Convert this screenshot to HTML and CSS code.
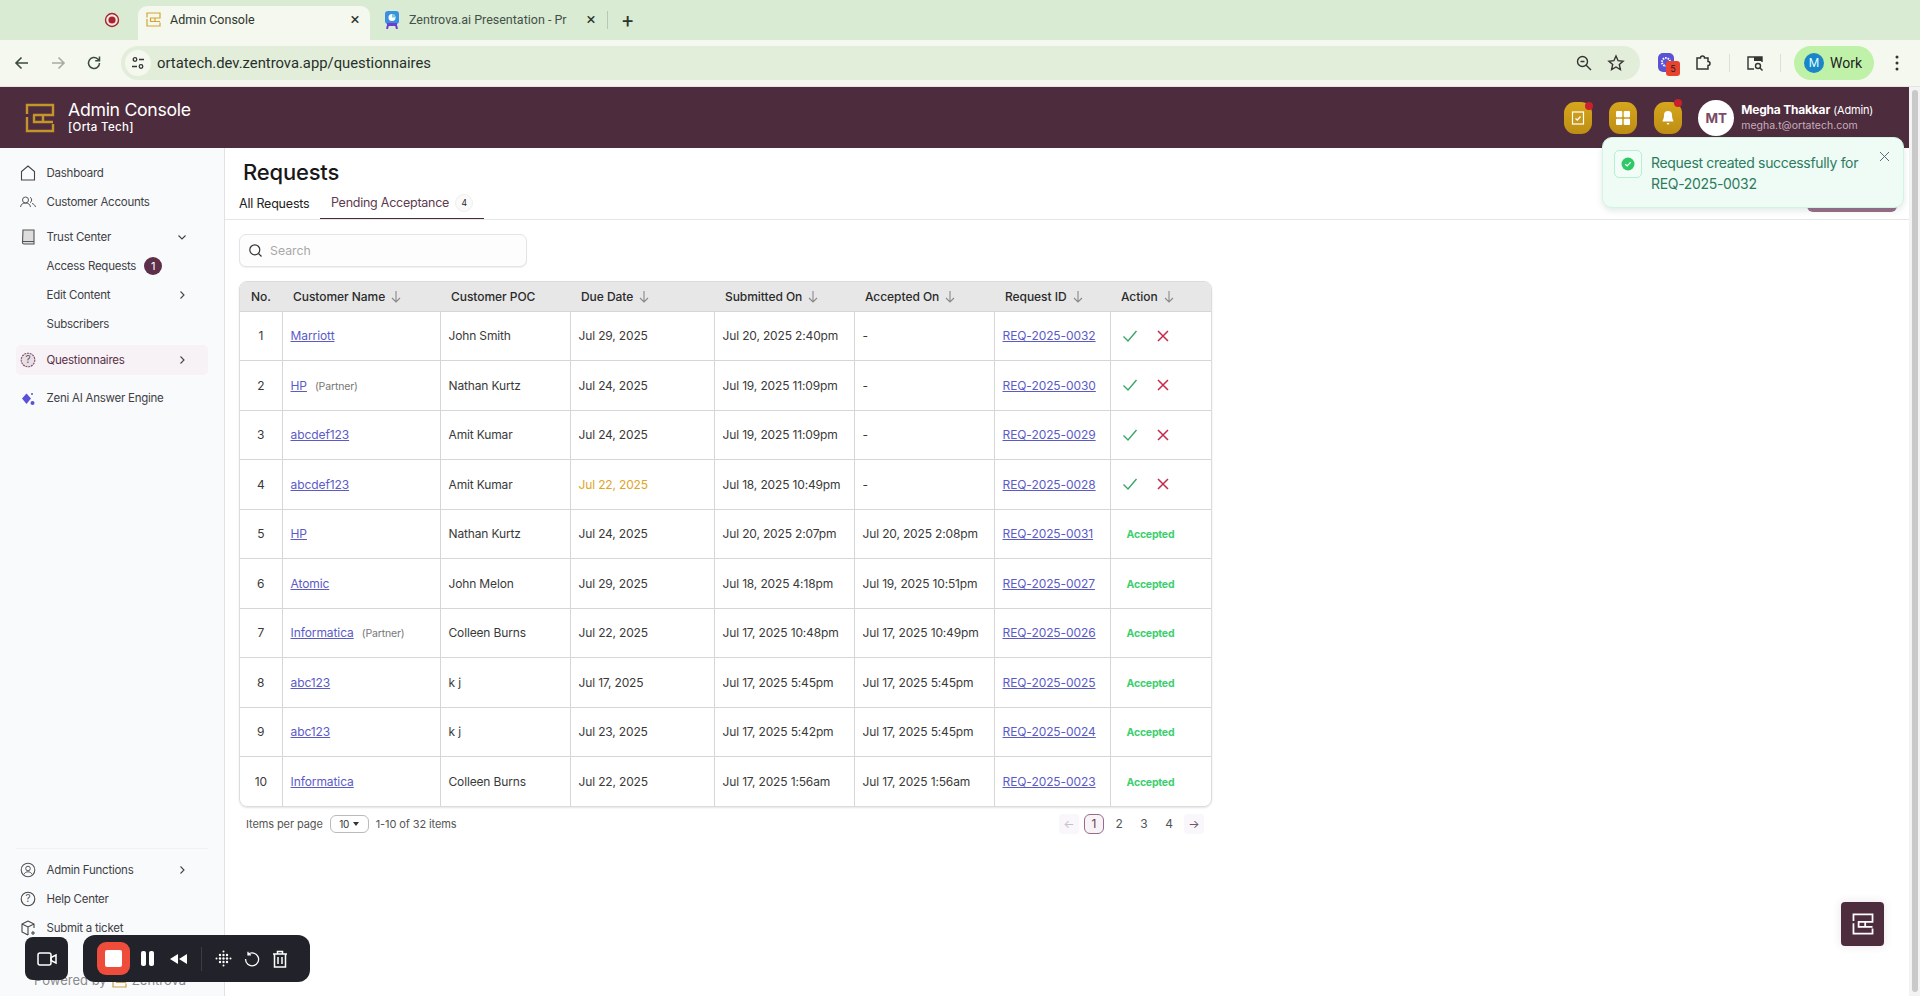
FILE: index.html
```html
<!DOCTYPE html>
<html lang="en">
<head>
<meta charset="utf-8">
<title>Admin Console</title>
<link rel="stylesheet" href="styles.css">
</head>
<body>
<svg class="defs" width="0" height="0">
  <symbol id="logo" viewBox="0 0 30 30"><path d="M2 11V2H28V12H8M2 14V28H28V21M9 12V19H18V12M18 19H28" fill="none" stroke="currentColor" stroke-width="2.4"/></symbol>
  <symbol id="down" viewBox="0 0 12 14"><path d="M6 1v11M2 8l4 4 4-4" fill="none" stroke="currentColor" stroke-width="1.1"/></symbol>
  <symbol id="right" viewBox="0 0 12 12"><path d="M4.5 2.5 8 6l-3.500 3.500" fill="none" stroke="currentColor" stroke-width="1.100"/></symbol>
  <symbol id="yes" viewBox="0 0 16 16"><path d="M1.500 8.500 6 13l8.500-10" fill="none" stroke="currentColor" stroke-width="1.400"/></symbol>
  <symbol id="no" viewBox="0 0 14 14"><path d="M2 2l10 10M12 2 2 12" fill="none" stroke="currentColor" stroke-width="1.500"/></symbol>
</svg>

<div class="window">
  <div class="tabstrip">
    <svg class="rec" width="16" height="16" viewBox="0 0 16 16"><circle cx="8" cy="8" r="6.500" fill="#f6e9e6" stroke="#a8242e" stroke-width="1.400"/><circle cx="8" cy="8" r="3.600" fill="#a8242e"/></svg>
    <div class="tab tab-active">
      <svg class="favicon fav-gold" width="15" height="15"><use href="#logo"/></svg>
      <span class="tab-title">Admin Console</span>
      <span class="tab-close">×</span>
    </div>
    <div class="tab tab-idle">
      <svg class="favicon" width="16" height="18" viewBox="0 0 16 18"><rect x="1" y="0" width="14" height="13" rx="3" fill="#3b8fe0"/><rect x="3" y="12" width="10" height="3" fill="#6b3fd0"/><path d="M4 14l-1 4M12 14l1 4" stroke="#6b3fd0" stroke-width="2"/><circle cx="8" cy="6.500" r="3.500" fill="#fff"/><path d="M8 6.500V3a3.500 3.500 0 0 1 3.500 3.500z" fill="#5ed0e8"/></svg>
      <span class="tab-title tab-fade">Zentrova.ai Presentation - Pr</span>
      <span class="tab-close">×</span>
    </div>
    <span class="tab-sep"></span>
    <span class="tab-new">+</span>
  </div>

  <div class="toolbar">
    <svg class="tool" width="18" height="18" viewBox="0 0 18 18"><path d="M15 9H3.500M8.500 3.500 3 9l5.500 5.500" fill="none" stroke="#3c4a3c" stroke-width="1.600"/></svg>
    <svg class="tool tool-off" width="18" height="18" viewBox="0 0 18 18"><path d="M3 9h11.500M9.500 3.500 15 9l-5.500 5.500" fill="none" stroke="#a5aca3" stroke-width="1.600"/></svg>
    <svg class="tool" width="18" height="18" viewBox="0 0 18 18"><path d="M14.500 9A5.500 5.500 0 1 1 12.800 5L14.500 6.700M14.500 2.500v4.300h-4.300" fill="none" stroke="#3c4a3c" stroke-width="1.500"/></svg>
    <div class="urlbar">
      <span class="site-chip"><svg width="16" height="16" viewBox="0 0 16 16"><circle cx="5" cy="4.500" r="1.800" fill="none" stroke="#333" stroke-width="1.300"/><path d="M9 4.500h5M2 11.500h5" stroke="#333" stroke-width="1.300"/><circle cx="11" cy="11.500" r="1.800" fill="none" stroke="#333" stroke-width="1.300"/></svg></span>
      <span class="url">ortatech.dev.zentrova.app/questionnaires</span>
      <svg class="url-zoom" width="18" height="18" viewBox="0 0 18 18"><circle cx="7.500" cy="7.500" r="5" fill="none" stroke="#333" stroke-width="1.400"/><path d="M11.200 11.200 16 16M5.500 7.500h4" stroke="#333" stroke-width="1.400"/></svg>
      <svg class="url-star" width="18" height="18" viewBox="0 0 18 18"><path d="M9 2l2.100 4.700 5 .5-3.800 3.300 1.100 5L9 13l-4.400 2.500 1.100-5L1.900 7.200l5-.5z" fill="none" stroke="#333" stroke-width="1.400"/></svg>
    </div>
    <div class="ext">
      <svg width="18" height="20" viewBox="0 0 18 20"><rect width="16" height="19" rx="5" fill="#5a53d6"/><circle cx="8" cy="9" r="4" fill="none" stroke="#fff" stroke-width="2" stroke-dasharray="1.500 1"/></svg>
      <span class="ext-badge">5</span>
    </div>
    <svg class="puzzle" width="18" height="18" viewBox="0 0 18 18"><path d="M3 4h3.500a2 2 0 0 1 4 0H14v3.500a2 2 0 0 1 0 4V15H3z" fill="none" stroke="#333" stroke-width="1.500"/></svg>
    <span class="tool-sep"></span>
    <svg class="split" width="18" height="18" viewBox="0 0 18 18"><path d="M8 15H2V3h14v5" fill="none" stroke="#333" stroke-width="1.400"/><rect x="8" y="3" width="8" height="4" fill="#333"/><circle cx="12" cy="12" r="2.500" fill="none" stroke="#333" stroke-width="1.400"/><path d="M14 14l2.500 2.500" stroke="#333" stroke-width="1.400"/></svg>
    <span class="tool-sep"></span>
    <div class="profile"><span class="profile-dot">M</span><span class="profile-name">Work</span></div>
    <svg class="dots" width="4" height="16" viewBox="0 0 4 16"><circle cx="2" cy="2" r="1.500" fill="#333"/><circle cx="2" cy="8" r="1.500" fill="#333"/><circle cx="2" cy="14" r="1.500" fill="#333"/></svg>
  </div>

  <div class="viewport">
    <div class="app">
      <header class="appbar">
        <svg class="brand-logo" width="30" height="30"><use href="#logo"/></svg>
        <div class="brand-text">
          <div class="brand-title">Admin Console</div>
          <div class="brand-org">[Orta Tech]</div>
        </div>
        <div class="appbar-actions">
          <span class="gold-btn dot-low"><svg width="14" height="14" viewBox="0 0 14 14"><rect x="1.500" y="1" width="11" height="12" fill="none" stroke="#fff" stroke-width="1.200"/><path d="M4.500 7.500 6.300 9 9.500 5.500" fill="none" stroke="#fff" stroke-width="1.300"/></svg></span>
          <span class="gold-btn"><svg width="16" height="16" viewBox="0 0 16 16"><rect x="1" y="1" width="6.300" height="6.300" rx="1" fill="#fff"/><rect x="8.700" y="1" width="6.300" height="6.300" rx="1" fill="#fff"/><rect x="1" y="8.700" width="6.300" height="6.300" rx="1" fill="#fff"/><rect x="8.700" y="8.700" width="6.300" height="6.300" rx="1" fill="#fff"/></svg></span>
          <span class="gold-btn dot-high"><svg width="16" height="16" viewBox="0 0 16 16"><path d="M8 1a4 4 0 0 1 4 4c0 4 1.500 5.500 1.500 6.500h-11C2.500 10.500 4 9 4 5a4 4 0 0 1 4-4zM6.500 13h3L8 15z" fill="#fff"/></svg></span>
        </div>
        <div class="avatar">MT</div>
        <div class="user">
          <div class="user-name"><b>Megha Thakkar</b> <span>(Admin)</span></div>
          <div class="user-mail">megha.t@ortatech.com</div>
        </div>
      </header>

      <div class="workspace">
        <aside class="sidebar">
          <nav class="nav">
            <a class="item"><svg class="ico" width="18" height="18" viewBox="0 0 18 18"><path d="M2.500 16V7.500L9 2l6.500 5.500V16z" fill="none" stroke="#444" stroke-width="1.100"/></svg>Dashboard</a>
            <a class="item"><svg class="ico" width="18" height="18" viewBox="0 0 18 18"><circle cx="6.500" cy="7" r="3" fill="none" stroke="#555" stroke-width="1"/><path d="M1.500 14c.5-3 2.500-4 5-4s4.500 1 5 4M11 4.300a3 3 0 0 1 0 5.400M13 10.500c2 .5 3 1.800 3.500 3.500" fill="none" stroke="#555" stroke-width="1"/></svg>Customer Accounts</a>
            <a class="item item-gap"><svg class="ico" width="18" height="18" viewBox="0 0 18 18"><path d="M4 2h11v14H5a1.500 1.500 0 0 1-1.500-1.500z" fill="#ddd" stroke="#555" stroke-width="1.100"/><path d="M3.500 13.500H15" stroke="#555"/></svg>Trust Center<svg class="chev chev-open" width="12" height="12"><use href="#right"/></svg></a>
            <a class="item item-sub">Access Requests<span class="count">1</span></a>
            <a class="item item-sub">Edit Content<svg class="chev" width="12" height="12"><use href="#right"/></svg></a>
            <a class="item item-sub">Subscribers</a>
            <a class="item item-current"><svg class="ico" width="18" height="18" viewBox="0 0 18 18"><circle cx="9" cy="9" r="6.800" fill="#eadde5" stroke="#7a5268" stroke-width="1.100" stroke-dasharray="2 .8"/><text class="qmark" x="9" y="12.200" text-anchor="middle">?</text></svg>Questionnaires<svg class="chev" width="12" height="12"><use href="#right"/></svg></a>
            <a class="item item-zeni"><svg class="ico" width="18" height="18" viewBox="0 0 18 18"><path d="M7.500 3.500 12 8.500 7.500 14 3 8.500z" fill="#5b50d8"/><circle cx="13.500" cy="13" r="2" fill="#5b50d8"/><circle cx="13" cy="4" r="1" fill="#5b50d8"/></svg>Zeni AI Answer Engine</a>
          </nav>
          <nav class="nav nav-bottom">
            <a class="item"><svg class="ico" width="18" height="18" viewBox="0 0 18 18"><circle cx="9" cy="9" r="6.800" fill="none" stroke="#555" stroke-width="1.100"/><circle cx="9" cy="7.500" r="2.300" fill="none" stroke="#555"/><path d="M4.800 13.500c1-2 2.500-2.700 4.200-2.700s3.200.7 4.200 2.700" fill="none" stroke="#555"/></svg>Admin Functions<svg class="chev" width="12" height="12"><use href="#right"/></svg></a>
            <a class="item"><svg class="ico" width="18" height="18" viewBox="0 0 18 18"><circle cx="9" cy="9" r="6.800" fill="none" stroke="#444" stroke-width="1.100"/><text class="qmark" x="9" y="12.200" text-anchor="middle">?</text></svg>Help Center</a>
            <a class="item"><svg class="ico" width="18" height="18" viewBox="0 0 18 18"><path d="M9 2l6 3v4M9 2 3 5v8l6 3M3 5l6 3 6-3M9 8v8" fill="none" stroke="#444" stroke-width="1.100"/><path d="M14 12v4M12 14h4" stroke="#444" stroke-width="1.100"/></svg>Submit a ticket</a>
            <div class="powered">Powered by <svg class="powered-logo" width="15" height="15"><use href="#logo"/></svg> Zentrova</div>
          </nav>
        </aside>

        <main class="main">
          <div class="head">
            <div class="head-left">
              <h1 class="title">Requests</h1>
              <div class="tabs">
                <a class="rtab">All Requests</a>
                <a class="rtab rtab-on">Pending Acceptance<span class="rtab-count">4</span></a>
              </div>
            </div>
            <span class="create-btn"></span>
          </div>

          <div class="search">
            <svg width="15" height="15" viewBox="0 0 15 15"><circle cx="6.800" cy="6.800" r="5" fill="none" stroke="#333" stroke-width="1.200"/><path d="M10.500 10.500 13.500 13.500" stroke="#333" stroke-width="1.200"/></svg>
            <span>Search</span>
          </div>

          <div class="table-wrap">
            <table class="grid">
              <colgroup><col class="c1"><col class="c2"><col class="c3"><col class="c4"><col class="c5"><col class="c6"><col class="c7"><col class="c8"></colgroup>
              <thead>
                <tr>
                  <th class="ctr">No.</th>
                  <th>Customer Name<svg class="sort" width="12" height="14"><use href="#down"/></svg></th>
                  <th>Customer POC</th>
                  <th>Due Date<svg class="sort" width="12" height="14"><use href="#down"/></svg></th>
                  <th>Submitted On<svg class="sort" width="12" height="14"><use href="#down"/></svg></th>
                  <th>Accepted On<svg class="sort" width="12" height="14"><use href="#down"/></svg></th>
                  <th>Request ID<svg class="sort" width="12" height="14"><use href="#down"/></svg></th>
                  <th>Action<svg class="sort" width="12" height="14"><use href="#down"/></svg></th>
                </tr>
              </thead>
              <tbody>
                <tr><td class="ctr">1</td><td><a class="lnk">Marriott</a></td><td>John Smith</td><td>Jul 29, 2025</td><td>Jul 20, 2025 2:40pm</td><td>-</td><td><a class="lnk">REQ-2025-0032</a></td><td><span class="acts"><svg class="yes" width="16" height="16"><use href="#yes"/></svg><svg class="no" width="14" height="14"><use href="#no"/></svg></span></td></tr>
                <tr><td class="ctr">2</td><td><a class="lnk">HP</a><span class="partner">(Partner)</span></td><td>Nathan Kurtz</td><td>Jul 24, 2025</td><td>Jul 19, 2025 11:09pm</td><td>-</td><td><a class="lnk">REQ-2025-0030</a></td><td><span class="acts"><svg class="yes" width="16" height="16"><use href="#yes"/></svg><svg class="no" width="14" height="14"><use href="#no"/></svg></span></td></tr>
                <tr><td class="ctr">3</td><td><a class="lnk">abcdef123</a></td><td>Amit Kumar</td><td>Jul 24, 2025</td><td>Jul 19, 2025 11:09pm</td><td>-</td><td><a class="lnk">REQ-2025-0029</a></td><td><span class="acts"><svg class="yes" width="16" height="16"><use href="#yes"/></svg><svg class="no" width="14" height="14"><use href="#no"/></svg></span></td></tr>
                <tr><td class="ctr">4</td><td><a class="lnk">abcdef123</a></td><td>Amit Kumar</td><td class="late">Jul 22, 2025</td><td>Jul 18, 2025 10:49pm</td><td>-</td><td><a class="lnk">REQ-2025-0028</a></td><td><span class="acts"><svg class="yes" width="16" height="16"><use href="#yes"/></svg><svg class="no" width="14" height="14"><use href="#no"/></svg></span></td></tr>
                <tr><td class="ctr">5</td><td><a class="lnk">HP</a></td><td>Nathan Kurtz</td><td>Jul 24, 2025</td><td>Jul 20, 2025 2:07pm</td><td>Jul 20, 2025 2:08pm</td><td><a class="lnk">REQ-2025-0031</a></td><td><span class="ok">Accepted</span></td></tr>
                <tr><td class="ctr">6</td><td><a class="lnk">Atomic</a></td><td>John Melon</td><td>Jul 29, 2025</td><td>Jul 18, 2025 4:18pm</td><td>Jul 19, 2025 10:51pm</td><td><a class="lnk">REQ-2025-0027</a></td><td><span class="ok">Accepted</span></td></tr>
                <tr><td class="ctr">7</td><td><a class="lnk">Informatica</a><span class="partner">(Partner)</span></td><td>Colleen Burns</td><td>Jul 22, 2025</td><td>Jul 17, 2025 10:48pm</td><td>Jul 17, 2025 10:49pm</td><td><a class="lnk">REQ-2025-0026</a></td><td><span class="ok">Accepted</span></td></tr>
                <tr><td class="ctr">8</td><td><a class="lnk">abc123</a></td><td>k j</td><td>Jul 17, 2025</td><td>Jul 17, 2025 5:45pm</td><td>Jul 17, 2025 5:45pm</td><td><a class="lnk">REQ-2025-0025</a></td><td><span class="ok">Accepted</span></td></tr>
                <tr><td class="ctr">9</td><td><a class="lnk">abc123</a></td><td>k j</td><td>Jul 23, 2025</td><td>Jul 17, 2025 5:42pm</td><td>Jul 17, 2025 5:45pm</td><td><a class="lnk">REQ-2025-0024</a></td><td><span class="ok">Accepted</span></td></tr>
                <tr><td class="ctr">10</td><td><a class="lnk">Informatica</a></td><td>Colleen Burns</td><td>Jul 22, 2025</td><td>Jul 17, 2025 1:56am</td><td>Jul 17, 2025 1:56am</td><td><a class="lnk">REQ-2025-0023</a></td><td><span class="ok">Accepted</span></td></tr>
              </tbody>
            </table>
          </div>

          <div class="pager">
            <span>Items per page</span>
            <span class="per-page">10<i class="caret"></i></span>
            <span>1-10 of 32 items</span>
            <div class="pages">
              <span class="arrow arrow-off">←</span>
              <span class="pg pg-on">1</span>
              <span class="pg">2</span>
              <span class="pg">3</span>
              <span class="pg">4</span>
              <span class="arrow">→</span>
            </div>
          </div>
        </main>
      </div>
    </div>
    <div class="scrollbar"><span class="thumb"></span></div>

    <div class="toast">
      <span class="toast-ico"><svg width="14" height="14" viewBox="0 0 14 14"><circle cx="7" cy="7" r="6.500" fill="#2ec866"/><path d="M4.200 7.200 6.200 9 9.800 5.200" fill="none" stroke="#fff" stroke-width="1.200"/></svg></span>
      <span class="toast-text">Request created successfully for REQ-2025-0032</span>
      <svg class="toast-x" width="11" height="11" viewBox="0 0 11 11"><path d="M1 1l9 9M10 1l-9 9" stroke="#667" stroke-width="1"/></svg>
    </div>

    <span class="fab"><svg width="22" height="22"><use href="#logo"/></svg></span>

    <div class="recorder">
      <span class="cam"><svg width="20" height="16" viewBox="0 0 20 16"><rect x="1" y="2" width="13" height="12" rx="2" fill="none" stroke="#fff" stroke-width="1.500"/><path d="M14 6.500 19 4v8l-5-2.500z" fill="none" stroke="#fff" stroke-width="1.500"/></svg></span>
      <div class="rec-bar">
        <span class="rec-stop"><i></i></span>
        <svg width="15" height="17" viewBox="0 0 15 17"><rect x="1" y="1" width="5" height="15" rx="2" fill="#fff"/><rect x="9" y="1" width="5" height="15" rx="2" fill="#fff"/></svg>
        <svg width="19" height="12" viewBox="0 0 19 12"><path d="M9 1v10L1 6zM18 1v10l-8-5z" fill="#fff"/></svg>
        <span class="rec-sep"></span>
        <svg width="17" height="17" viewBox="0 0 17 17" fill="#fff"><circle cx="8.500" cy="1.500" r="1"/><circle cx="5" cy="5" r="1.200"/><circle cx="8.500" cy="5" r="1.200"/><circle cx="12" cy="5" r="1.200"/><circle cx="1.500" cy="8.500" r="1"/><circle cx="5" cy="8.500" r="1.200"/><circle cx="8.500" cy="8.500" r="1.200"/><circle cx="12" cy="8.500" r="1.200"/><circle cx="15.500" cy="8.500" r="1"/><circle cx="5" cy="12" r="1.200"/><circle cx="8.500" cy="12" r="1.200"/><circle cx="12" cy="12" r="1.200"/><circle cx="8.500" cy="15.500" r="1"/></svg>
        <svg width="16" height="16" viewBox="0 0 16 16"><path d="M4 3.300A6.500 6.500 0 1 1 1.600 8M4 .8v3h3" fill="none" stroke="#fff" stroke-width="1.300"/></svg>
        <svg width="16" height="18" viewBox="0 0 16 18"><path d="M1 4h14M5.500 4V1.500h5V4M2.500 4v13h11V4M6 7v7M10 7v7" fill="none" stroke="#fff" stroke-width="1.500"/></svg>
      </div>
    </div>
  </div>
</div>
</body>
</html>
```

FILE: styles.css
```css
* { box-sizing: border-box; }
html, body { margin: 0; height: 100%; overflow: hidden; }
body { font-family: Inter, "Liberation Sans", sans-serif; color: #333; background: #fff; }
.defs { position: absolute; }
.window { width: 1920px; height: 996px; display: flex; flex-direction: column; }

/* browser chrome */
.tabstrip { height: 40px; flex: none; background: #d9ebd2; display: flex; align-items: flex-end; font-family: Roboto, sans-serif; font-size: 12.500px; color: #2d352c; }
.rec { margin: 0 18px 12px 104px; }
.tab { height: 34px; display: flex; align-items: center; padding-bottom: 7px; }
.tab-active { width: 232px; background: #f4f8ee; border-radius: 9px 9px 0 0; padding-left: 8px; }
.tab-idle { width: 240px; padding-left: 14px; }
.favicon { flex: none; margin-right: 9px; margin-left: 0; }
.fav-gold { color: #d4a530; }
.tab-title { flex: 1; white-space: nowrap; overflow: hidden; }
.tab-fade { color: #44504a; }
.tab-close { width: 22px; font-size: 17px; line-height: 1; text-align: center; margin-right: 4px; }
.tab-idle .tab-close { margin-right: 8px; }
.tab-sep { width: 1px; height: 18px; background: #b8c8b2; margin: 0 0 11px -3px; }
.tab-new { font-size: 20px; margin: 0 0 9px 14px; line-height: 1; }
.toolbar { height: 47px; flex: none; background: #f4f8ee; display: flex; align-items: center; border-bottom: 1px solid #e6e6e0; }
.tool { margin-left: 13px; margin-right: 5px; }
.tool-off { margin-left: 13px; }
.urlbar { width: 1519px; height: 34px; margin-left: 13px; background: #e3eeda; border-radius: 17px; display: flex; align-items: center; font-family: Roboto, sans-serif; font-size: 14.800px; color: #26302a; }
.site-chip { width: 26px; height: 26px; margin-left: 4px; border-radius: 50%; background: #f4f8ee; display: flex; align-items: center; justify-content: center; }
.url { margin-left: 6px; flex: 1; }
.url-zoom { margin-right: 14px; }
.url-star { margin-right: 15px; }
.ext { position: relative; margin-left: 18px; width: 20px; height: 20px; }
.ext-badge { position: absolute; left: 8px; top: 8px; width: 14px; height: 15px; border-radius: 3px; background: #e8432e; font-size: 9px; color: #222; text-align: center; line-height: 15px; }
.puzzle { margin-left: 16px; }
.tool-sep { width: 1px; height: 18px; background: #d8e2d0; margin: 0 17px; }
.split { margin: 0 -1px; }
.profile { width: 80px; height: 34px; margin-left: -4px; border-radius: 17px; background: #bff2a8; display: flex; align-items: center; padding-left: 10px; font-family: Roboto, sans-serif; font-size: 14px; color: #222; }
.profile-dot { width: 20px; height: 20px; border-radius: 50%; background: #1a86c8; color: #dff; font-size: 12px; text-align: center; line-height: 20px; margin-right: 6px; }
.dots { margin-left: 21px; }

.viewport { flex: 1; min-height: 0; display: flex; position: relative; }
.app { flex: 1; min-width: 0; display: flex; flex-direction: column; }
.scrollbar { width: 11px; flex: none; background: #f3f3f3; padding: 3px 2px 4px 3px; }
.thumb { display: block; height: 100%; background: #c9c9c9; border-radius: 3px; }

/* app header */
.appbar { height: 61px; flex: none; background: #4d2c3d; display: flex; align-items: center; color: #fff; padding-left: 25px; }
.brand-logo { color: #c4952a; }
.brand-text { margin: -2px 0 0 13px; }
.brand-title { font-size: 17.700px; line-height: 22px; letter-spacing: -.3px; font-weight: 400; }
.brand-org { font-size: 11.500px; line-height: 13px; font-weight: 500; letter-spacing: .3px; }
.appbar-actions { margin-left: auto; display: flex; gap: 17px; }
.gold-btn { position: relative; width: 28px; height: 32px; border-radius: 11px; background: linear-gradient(#d6a61c, #bd8e14); display: flex; align-items: center; justify-content: center; }
.dot-low::after, .dot-high::after { content: ""; position: absolute; width: 8px; height: 8px; border-radius: 50%; background: #c8202c; right: -1px; top: 0; }
.dot-high::after { top: -3px; right: 0; }
.avatar { width: 36px; height: 36px; border-radius: 50%; background: #fff; color: #7b4a66; font-weight: 700; font-size: 13.500px; text-align: center; line-height: 36px; margin-left: 16px; }
.user { margin: 0 36px 0 7px; }
.user-name { font-size: 12px; line-height: 16px; white-space: nowrap; letter-spacing: -.2px; }
.user-name b { font-weight: 700; }
.user-name span { font-size: 11px; }
.user-mail { font-size: 10.500px; line-height: 15px; color: #c8aebd; }

.workspace { flex: 1; min-height: 0; display: flex; }

/* sidebar */
.sidebar { width: 225px; flex: none; background: #f9fafb; border-right: 1px solid #e2e2e6; display: flex; flex-direction: column; padding: 10px 16px 8px; font-size: 11.500px; color: #3f3f46; }
.nav { display: flex; flex-direction: column; }
.item { position: relative; height: 29px; display: flex; align-items: center; white-space: nowrap; letter-spacing: -.25px; padding-left: 30.500px; }
.ico { position: absolute; left: 3px; top: 6px; }
.item-gap { margin-top: 6px; }
.item-current { background: #f7f2f5; border-radius: 5px; color: #5a3148; height: 30px; margin-top: 7px; }
.item-zeni { margin-top: 8.500px; }
.chev { position: absolute; left: 160px; top: 9px; color: #444; }
.chev-open { transform: rotate(90deg); }
.count { width: 18px; height: 18px; margin-left: 8px; border-radius: 50%; background: #5e2f4a; color: #fff; font-size: 11px; text-align: center; line-height: 18px; letter-spacing: 0; }
.qmark { font-size: 10px; fill: #555; }
.nav-bottom { margin-top: auto; border-top: 1px solid #f1f1f3; padding-top: 6px; }
.powered { margin: 30px 0 0 18px; height: 16px; color: #8a8a8f; font-size: 13px; line-height: 16px; white-space: nowrap; display: flex; align-items: center; gap: 5px; }
.powered-logo { color: #c9a24b; }

/* main */
.main { flex: 1; min-width: 0; display: flex; flex-direction: column; }
.head { height: 72px; flex: none; display: flex; justify-content: space-between; align-items: flex-start; border-bottom: 1px solid #e6e6e6; padding: 0 12px 0 14px; }
.head-left { display: flex; flex-direction: column; }
.title { margin: 10px 0 0 4px; font-size: 22px; line-height: 28px; font-weight: 500; color: #18181b; letter-spacing: -.2px; }
.tabs { display: flex; margin-top: 1px; font-size: 12.500px; letter-spacing: -.2px; }
.rtab { height: 32px; display: flex; align-items: center; color: #222; }
.rtab-on { margin-left: 10.500px; padding: 0 11px 0 11px; color: #5e3a4e; border-bottom: 1px solid #4d2c3d; letter-spacing: -.25px; }
.rtab-count { width: 18px; height: 18px; margin-left: 6px; border-radius: 50%; background: #fafafa; border: 1px solid #f0f0f0; font-size: 8.500px; color: #222; text-align: center; line-height: 16px; }
.create-btn { width: 90px; height: 36px; margin-top: 28px; border-radius: 6px; background: #9a6a8a; }
.search { width: 288px; height: 33px; margin: 14px 0 0 14px; flex: none; border: 1px solid #e4e4e7; border-radius: 7px; background: #fdfdfd; display: flex; align-items: center; padding-left: 8px; gap: 7px; font-size: 12.300px; color: #a8a8a8; box-shadow: 0 1px 1px #f0f0f0; }
.table-wrap { width: 973px; margin: 14px 0 0 14px; flex: none; border: 1px solid #dcdcdc; border-radius: 8px; overflow: hidden; box-shadow: 0 1px 2px #e4e4e4; }
.grid { width: 100%; table-layout: fixed; border-collapse: collapse; font-size: 12px; letter-spacing: -.15px; color: #3a3a3a; }
.c1 { width: 42px; } .c2 { width: 158px; } .c3 { width: 130px; } .c4 { width: 144px; } .c5 { width: 140px; } .c6 { width: 140px; } .c7 { width: 116px; } .c8 { width: 101px; }
.grid th { height: 29px; background: #e7e7e7; text-align: left; font-weight: 500; color: #2b2b2b; padding: 0 0 0 11px; white-space: nowrap; letter-spacing: -.05px; }
.grid td { height: 49.500px; padding: 0 0 0 8px; border: 1px solid #d6d6d6; white-space: nowrap; }
.grid th.ctr, .grid td.ctr { text-align: center; padding: 0; }
.grid td:first-child { border-left: 0; }
.grid td:last-child { border-right: 0; }
.grid tbody tr:last-child td { border-bottom: 0; }
.grid thead tr { border-bottom: 1px solid #d6d6d6; }
.sort { vertical-align: -3px; margin-left: 5px; color: #8a8a8a; }
.lnk { color: #5b5bc8; text-decoration: underline; letter-spacing: -.08px; }
.partner { margin-left: 8px; font-size: 10.500px; color: #777; }
.late { color: #e0a526; }
.acts { display: flex; align-items: center; gap: 18px; padding-left: 3px; }
.yes { color: #3aa56a; }
.no { color: #c8284a; }
.ok { margin-left: 8px; font-size: 10.500px; font-weight: 700; color: #3ccf6e; letter-spacing: -.2px; }
.pager { width: 973px; margin: 6px 0 0 14px; height: 22px; flex: none; display: flex; align-items: center; padding-left: 7px; gap: 7px; font-size: 11px; color: #555; letter-spacing: -.1px; }
.per-page { width: 39px; height: 18px; border: 1px solid #bbb; border-radius: 6px; font-size: 10px; color: #333; display: flex; align-items: center; justify-content: center; gap: 4px; }
.caret { border: 3.500px solid transparent; border-top: 4px solid #333; border-bottom: 0; }
.pages { margin-left: auto; display: flex; align-items: center; gap: 5px; padding-right: 8px; }
.pg { width: 20px; height: 20px; text-align: center; line-height: 20px; font-size: 12px; }
.pg-on { background: #f8f3f6; border: 1px solid #9a6a8a; border-radius: 6px; line-height: 18px; color: #6a4058; }
.arrow { width: 20px; height: 20px; text-align: center; line-height: 19px; font-size: 12px; background: #f9f7fb; color: #6a5a66; border-radius: 3px; }
.arrow-off { color: #c8bfc6; }

/* overlays */
.toast { position: absolute; left: 1602px; top: 50px; width: 302px; height: 71px; padding: 12px 14px 0 11px; display: flex; gap: 9px; background: #eefcf5; border: 1px solid #d2f5e2; border-radius: 10px; box-shadow: 0 3px 6px rgba(60,120,90,.15); }
.toast-ico { width: 28px; height: 28px; flex: none; display: flex; align-items: center; justify-content: center; border: 1px solid #b8efd0; border-radius: 5px; background: #f3fdf8; }
.toast-text { font-size: 14px; line-height: 21px; color: #2d7a5e; letter-spacing: -.32px; width: 212px; padding-top: 2px; }
.toast-x { position: absolute; right: 13px; top: 13px; }
.fab { position: absolute; left: 1841px; top: 815px; width: 43px; height: 44px; background: #4d2c3d; border-radius: 4px; color: #fff; display: flex; align-items: center; justify-content: center; box-shadow: 0 0 8px rgba(120,60,100,.15); }
.recorder { position: absolute; left: 25px; top: 848px; display: flex; align-items: center; gap: 15px; }
.cam { width: 43px; height: 43px; border-radius: 8px; background: #22232a; display: flex; align-items: center; justify-content: center; }
.rec-bar { width: 227px; height: 47px; border-radius: 12px; background: #22232a; display: flex; align-items: center; padding-left: 14px; }
.rec-stop { width: 33px; height: 33px; border-radius: 9px; background: #ef4d3c; display: flex; align-items: center; justify-content: center; }
.rec-stop i { width: 17px; height: 17px; border-radius: 2px; background: #fff; }
.rec-bar svg:nth-of-type(1) { margin-left: 10px; }
.rec-bar svg:nth-of-type(2) { margin-left: 14px; }
.rec-sep { width: 1px; height: 24px; background: #3c3d44; margin: 0 13px; }
.rec-bar svg:nth-of-type(4) { margin-left: 12px; }
.rec-bar svg:nth-of-type(5) { margin-left: 12px; }
```
